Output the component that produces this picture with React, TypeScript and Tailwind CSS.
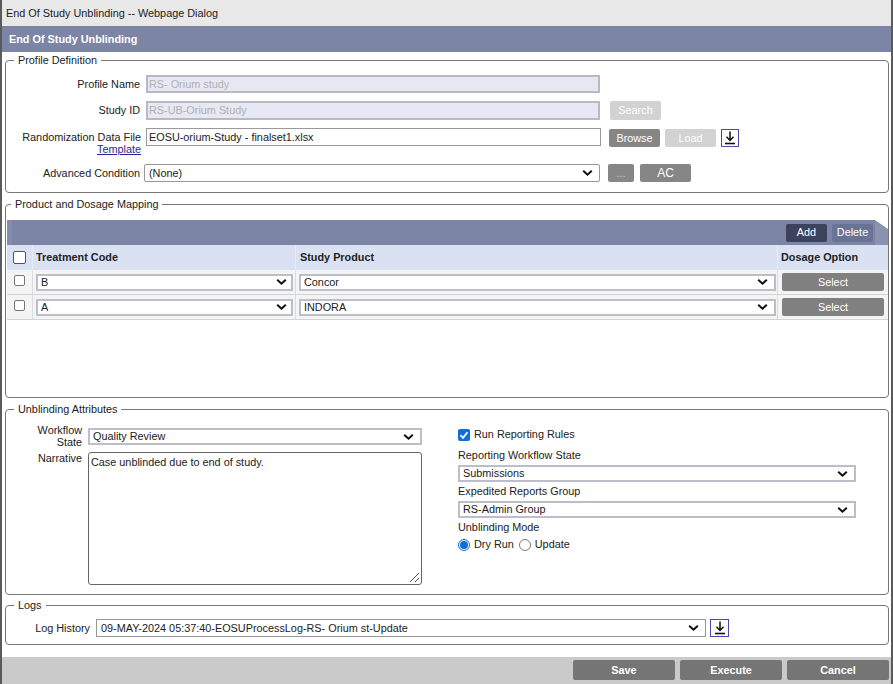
import React from "react";

const Chevron = ({ right }: { right: string }) => (
  <svg className={"absolute top-1/2 -translate-y-1/2 pointer-events-none " + right} width="11" height="7" viewBox="0 0 11 7">
    <path d="M1.2 1.2 L5.5 5.2 L9.8 1.2" fill="none" stroke="#111" strokeWidth="2" />
  </svg>
);

function Sel({ value, className, right = "right-[6px]" }: { value: string; className: string; right?: string }) {
  return (
    <div className={"relative flex items-center bg-white text-[10.85px] text-[#222] " + className}>
      <span>{value}</span>
      <Chevron right={right} />
    </div>
  );
}

function Btn({ label, className }: { label: string; className: string }) {
  return <button className={"flex items-center justify-center rounded-[2px] text-[10.85px] " + className}>{label}</button>;
}

const DownloadIcon = ({ className }: { className: string }) => (
  <div className={"flex items-center justify-center border border-[#4a4aa8] bg-white " + className}>
    <svg width="12" height="14" viewBox="0 0 12 14">
      <path d="M6 0.5 V9 M2.5 5.8 L6 9.5 L9.5 5.8" fill="none" stroke="#111" strokeWidth="1.5" />
      <path d="M1 12.5 H11" stroke="#111" strokeWidth="1.6" />
    </svg>
  </div>
);

function Box({ legend, className, legendClass = "ml-[8px]", children }: { legend: string; className: string; legendClass?: string; children: React.ReactNode }) {
  return (
    <fieldset className={"min-w-0 rounded-[4px] border border-[#777] " + className}>
      <legend className={"px-[4px] text-[10.85px] leading-[14px] text-[#222] " + legendClass}>{legend}</legend>
      {children}
    </fieldset>
  );
}

const Label = ({ children, className }: { children: React.ReactNode; className: string }) => (
  <div className={"text-right text-[10.85px] leading-[13px] text-[#222] " + className}>{children}</div>
);

const roField = "flex h-[18px] w-[454px] items-center border-2 border-[#b8b9c4] bg-[#e6e8f4] pl-[1px] text-[10.85px] text-[#b0b0b0]";
const dark = "bg-[#868686] text-white";
const light = "bg-[#d2d2d2] text-white";
const tableSel = "h-[17px] border-2 border-[#bcbfca] pl-[3px]";
const attrSel = "h-[17px] border-2 border-[#bcbecc] pl-[3px]";

function Row({ code, product }: { code: string; product: string }) {
  return (
    <div className="grid h-[25px] grid-cols-[26px_263px_482px_110px] border-b border-[#d4d4d4] bg-[#f4f4f4]">
      <div className="flex items-center justify-center border-r border-[#dcdcdc] pb-[4px]">
        <span className="h-[11px] w-[11px] rounded-[2px] border border-[#767676] bg-white" />
      </div>
      <div className="flex items-center border-r border-[#dcdcdc] pl-[3px]">
        <Sel value={code} className={tableSel + " w-[257px]"} right="right-[4px]" />
      </div>
      <div className="flex items-center border-r border-[#dcdcdc] pl-[3px]">
        <Sel value={product} className={tableSel + " w-[477px]"} />
      </div>
      <div className="flex items-center pl-[4px]">
        <Btn label="Select" className="h-[18px] w-[102px] bg-[#808080] text-white" />
      </div>
    </div>
  );
}

export default function App() {
  return (
    <div className="flex h-[684px] w-[893px] flex-col overflow-hidden border-x-2 border-[#5a5a5a] bg-white font-['Liberation_Sans',Arial,sans-serif]">
      <div className="-mx-[1px] flex h-[26px] shrink-0 items-center bg-[#e8e8e8] pl-[5px] text-[10.85px] text-[#222]">
        End Of Study Unblinding -- Webpage Dialog
      </div>
      <div className="-mx-[2px] flex h-[26px] shrink-0 items-center bg-[#7c85a6] pl-[9px] text-[10.85px] font-bold text-white">
        End Of Study Unblinding
      </div>

      <Box legend="Profile Definition" className="ml-[3px] mr-[2px] mt-[1px] h-[140px]">
        <div className="mt-[8px] flex h-[18px] items-center">
          <Label className="w-[135px] pr-[1px]">Profile Name</Label>
          <div className={"ml-[5px] " + roField}>RS- Orium study</div>
        </div>
        <div className="mt-[8px] flex h-[19px] items-center">
          <Label className="w-[135px] pr-[1px]">Study ID</Label>
          <div className={"ml-[5px] " + roField + " h-[19px]"}>RS-UB-Orium Study</div>
          <Btn label="Search" className={"ml-[10px] h-[19px] w-[51px] " + light} />
        </div>
        <div className="mt-[8px] flex h-[18px] items-center">
          <Label className="w-[135px]">Randomization Data File</Label>
          <div className="ml-[5px] flex h-[18px] w-[455px] items-center border border-[#999] bg-white pl-[2px] text-[10.85px] text-[#222]">
            EOSU-orium-Study - finalset1.xlsx
          </div>
          <Btn label="Browse" className={"ml-[8px] mt-[2px] h-[18px] w-[51px] " + dark} />
          <Btn label="Load" className={"ml-[5px] mt-[2px] h-[18px] w-[51px] " + light} />
          <DownloadIcon className="ml-[5px] mt-[2px] h-[18px] w-[18px]" />
        </div>
        <Label className="-mt-[3px] w-[135px] !text-[#2a1f9e] underline">Template</Label>
        <div className="mt-[8px] flex h-[18px] items-center">
          <Label className="w-[135px] pr-[1px]">Advanced Condition</Label>
          <Sel value="(None)" className="ml-[3px] h-[18px] w-[456px] rounded-[2px] border border-[#999] pl-[4px]" />
          <Btn label="..." className="ml-[8px] h-[18px] w-[26px] bg-[#868686] text-[#d0d0d0]" />
          <Btn label="AC" className={"ml-[6px] h-[18px] w-[51px] " + dark + " !text-[12px]"} />
        </div>
      </Box>

      <Box legend="Product and Dosage Mapping" legendClass="ml-[5px]" className="ml-[3px] mr-[2px] mt-[4px] h-[201px]">
        <div className="relative ml-[1px] mt-[9px] flex h-[25px] items-center justify-end gap-[5px] bg-[#7c85a6] pr-[15px]">
          <span className="absolute bottom-0 left-0 top-0 w-[5px] bg-[#838cac]" />
          <svg className="absolute right-0 top-0" width="13" height="25" viewBox="0 0 13 25">
            <rect width="13" height="25" fill="#8a92b0" />
            <polygon points="0,0 13,0 13,9" fill="#ffffff" />
          </svg>
          <Btn label="Add" className="relative h-[18px] w-[41px] bg-[#3d425c] text-white" />
          <Btn label="Delete" className="relative h-[18px] w-[41px] bg-[#697395] text-white" />
        </div>
        <div className="ml-[1px] grid h-[25px] grid-cols-[26px_263px_482px_110px] bg-[#d9e1f2] text-[10.85px] font-bold text-[#222]">
          <div className="flex items-center justify-center border-r border-[#e6ebf6]">
            <span className="h-[13px] w-[13px] rounded-[2px] border border-[#555] bg-white" />
          </div>
          <div className="flex items-center border-r border-[#e6ebf6] pl-[3px]">Treatment Code</div>
          <div className="flex items-center border-r border-[#e6ebf6] pl-[4px]">Study Product</div>
          <div className="flex items-center pl-[3px]">Dosage Option</div>
        </div>
        <div className="ml-[1px]">
          <Row code="B" product="Concor" />
          <Row code="A" product="INDORA" />
        </div>
      </Box>

      <Box legend="Unblinding Attributes" className="ml-[3px] mr-[2px] mt-[4px] h-[193px]">
        <div className="flex">
          <div className="flex flex-col">
            <div className="mt-[8px] flex items-start">
              <Label className="w-[76px] !leading-[12px]">Workflow<br />State</Label>
              <Sel value="Quality Review" className={"ml-[6px] mt-[4px] w-[334px] " + attrSel} />
            </div>
            <div className="mt-[3px] flex items-start">
              <Label className="mt-[1px] w-[76px]">Narrative</Label>
              <div className="relative ml-[6px] mt-[1px] h-[133px] w-[334px] rounded-[3px] border border-[#666] bg-white px-[2px] py-[3px] text-[10.85px] leading-[13px] text-[#222]">
                Case unblinded due to end of study.
                <svg className="absolute bottom-[1px] right-[1px]" width="11" height="11" viewBox="0 0 11 11">
                  <path d="M1 10 L10 1 M6 10 L10 6" stroke="#555" strokeWidth="1" />
                </svg>
              </div>
            </div>
          </div>
          <div className="ml-[36px] flex flex-col text-[10.85px] leading-[13px] text-[#222]">
            <div className="mt-[12px] flex items-center">
              <span className="flex h-[12px] w-[12px] items-center justify-center rounded-[2px] bg-[#0f6fd6]">
                <svg width="10" height="10" viewBox="0 0 10 10">
                  <path d="M1.5 5.2 L4 7.8 L8.5 2.2" fill="none" stroke="#fff" strokeWidth="1.8" />
                </svg>
              </span>
              <span className="ml-[4px]">Run Reporting Rules</span>
            </div>
            <div className="mt-[8px]">Reporting Workflow State</div>
            <Sel value="Submissions" className={"mt-[3px] w-[398px] " + attrSel} />
            <div className="mt-[3px]">Expedited Reports Group</div>
            <Sel value="RS-Admin Group" className={"mt-[3px] w-[398px] " + attrSel} />
            <div className="mt-[3px]">Unblinding Mode</div>
            <div className="mt-[4px] flex items-center">
              <span className="flex h-[12px] w-[12px] items-center justify-center rounded-full border border-[#0f6fd6] bg-white">
                <span className="h-[8px] w-[8px] rounded-full bg-[#0f6fd6]" />
              </span>
              <span className="ml-[4px]">Dry Run</span>
              <span className="ml-[5px] h-[12px] w-[12px] rounded-full border border-[#767676] bg-white" />
              <span className="ml-[4px]">Update</span>
            </div>
          </div>
        </div>
      </Box>

      <Box legend="Logs" className="ml-[3px] mr-[2px] mt-[3px] h-[47px]">
        <div className="mt-[7px] flex h-[18px] items-center">
          <Label className="w-[84px]">Log History</Label>
          <Sel value="09-MAY-2024 05:37:40-EOSUProcessLog-RS- Orium st-Update" className="ml-[6px] h-[18px] w-[610px] border border-[#999] pl-[4px]" />
          <DownloadIcon className="ml-[4px] h-[18px] w-[19px]" />
        </div>
      </Box>

      <div className="-mx-[2px] mt-auto flex h-[27px] shrink-0 items-center justify-end gap-[5px] bg-[#cacaca] pb-[1px] pr-[4px]">
        <Btn label="Save" className="h-[20px] w-[102px] bg-[#757575] font-bold text-white" />
        <Btn label="Execute" className="h-[20px] w-[102px] bg-[#757575] font-bold text-white" />
        <Btn label="Cancel" className="h-[20px] w-[102px] bg-[#757575] font-bold text-white" />
      </div>
    </div>
  );
}
